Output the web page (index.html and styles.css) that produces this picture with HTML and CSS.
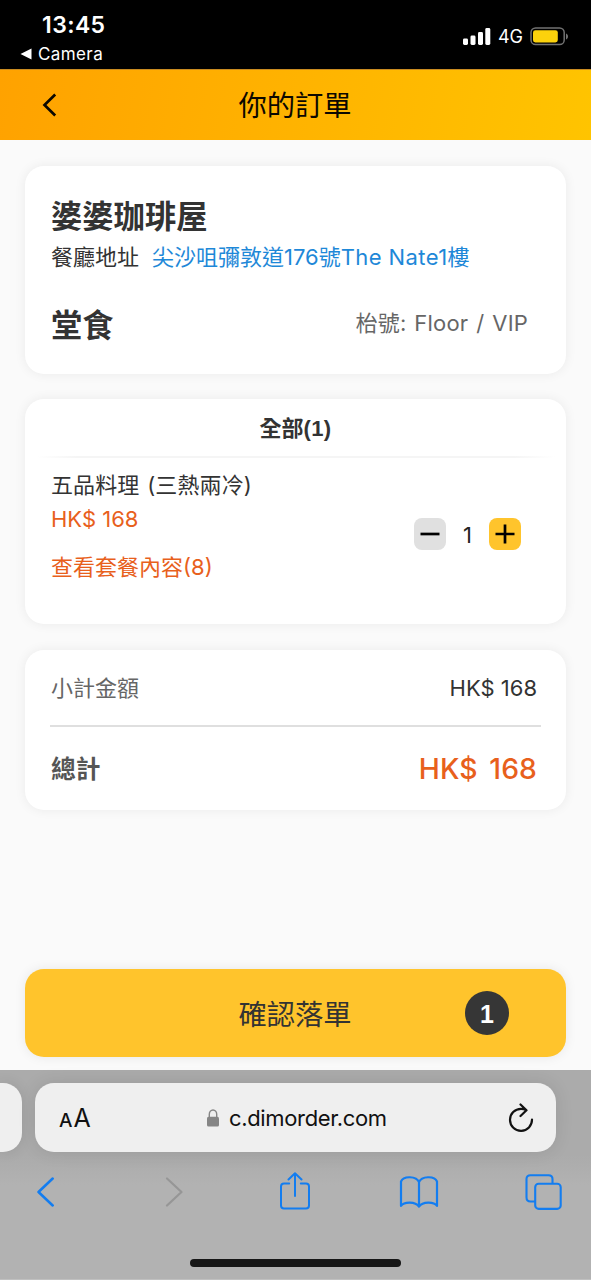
FILE: index.html
```html
<!DOCTYPE html>
<html lang="zh-HK">
<head>
<meta charset="utf-8">
<title>你的訂單</title>
<link rel="stylesheet" href="styles.css">
</head>
<body>
<div class="screen">
  <div class="status">
    <div class="status-left">
      <div class="clock">13:45</div>
      <div class="return-app">
        <svg width="12" height="12" viewBox="0 0 12 12"><path d="M.5 6 11.500.6v10.800z" fill="#fff"/></svg>
        <span>Camera</span>
      </div>
    </div>
    <div class="status-right">
      <svg width="28" height="17" viewBox="0 0 28 17" fill="#fff"><rect x="0" y="10.5" width="5" height="6.5" rx="1.4"/><rect x="7.5" y="7.5" width="5" height="9.5" rx="1.4"/><rect x="15" y="4" width="5" height="13" rx="1.4"/><rect x="22.3" y="0" width="5" height="17" rx="1.4"/></svg>
      <span class="network">4G</span>
      <svg width="39" height="19" viewBox="0 0 39 19"><rect x="1" y="1" width="33.2" height="16.6" rx="4.6" fill="none" stroke="#727272" stroke-width="1.5"/><rect x="3" y="3.2" width="24.8" height="12.2" rx="2.4" fill="#fcd20c"/><path d="M36 6.4c2.700 1 2.700 5 0 6z" fill="#727272"/></svg>
    </div>
  </div>

  <header class="header">
    <svg class="back" width="16" height="24" viewBox="0 0 16 24"><path d="M13.200 1.500 2.500 12l10.700 10.500" fill="none" stroke="#0c0800" stroke-width="2.700"/></svg>
    <h1 class="title">你的訂單</h1>
  </header>

  <main class="page">
    <section class="card shop">
      <h2 class="shop-name">婆婆珈琲屋</h2>
      <p class="address"><span>餐廳地址</span><a class="link">尖沙咀彌敦道176號<span class="latin">The Nate1</span>樓</a></p>
      <div class="dining">
        <h2 class="dining-type">堂食</h2>
        <span class="table">枱號: Floor / VIP</span>
      </div>
    </section>

    <section class="card order">
      <h3 class="tab">全部<span class="tab-count">(1)</span></h3>
      <div class="rule-soft"></div>
      <div class="item">
        <div class="item-text">
          <p class="item-name">五品料理 (三熱兩冷)</p>
          <p class="price">HK$ 168</p>
          <p class="details">查看套餐內容(8)</p>
        </div>
        <div class="stepper">
          <span class="step minus"><svg width="20" height="20" viewBox="0 0 20 20"><path d="M.5 10h19" stroke="#000" stroke-width="2.700"/></svg></span>
          <span class="count">1</span>
          <span class="step plus"><svg width="20" height="20" viewBox="0 0 20 20"><path d="M.5 10h19M10 .5v19" stroke="#000" stroke-width="2.700"/></svg></span>
        </div>
      </div>
    </section>

    <section class="card totals">
      <div class="row subtotal"><span>小計金額</span><span class="amount">HK$ 168</span></div>
      <div class="row total"><span class="total-label">總計</span><span class="total-amount">HK$ 168</span></div>
    </section>

    <button class="confirm"><span class="confirm-text">確認落單</span><span class="badge">1</span></button>
  </main>

  <footer class="browser">
    <div class="tabs">
      <div class="tab-prev"></div>
      <div class="urlbar">
        <span class="text-size"><span class="small-a">A</span>A</span>
        <span class="url">
          <svg width="12" height="18" viewBox="0 0 12 18"><rect x="0" y="7.800" width="12" height="9.700" rx="1.600" fill="#858585"/><path d="M2.300 8.500V5.300a3.700 4.300 0 0 1 7.400 0v3.200" fill="none" stroke="#858585" stroke-width="1.400"/></svg>
          <span>c.dimorder.com</span>
        </span>
        <svg class="reload" width="26" height="30" viewBox="0 0 26 30" fill="none" stroke="#111" stroke-width="2.200" stroke-linecap="round" stroke-linejoin="round"><path d="M24 16.500A11 11 0 1 1 13 5.800q2.700 0 5.200 1.200M12.500 1.500l6 5.700-6 5.800"/></svg>
      </div>
    </div>
    <nav class="toolbar">
      <svg width="20" height="30" viewBox="0 0 20 30"><path d="M17.700 1.500 3.500 15l14.200 13.500" fill="none" stroke="#137df0" stroke-width="2.500" stroke-linecap="round" stroke-linejoin="round"/></svg>
      <svg class="forward" width="20" height="30" viewBox="0 0 20 30"><path d="M2 1.500 16.500 15 2 28.500" fill="none" stroke="#969696" stroke-width="2.200" stroke-linecap="round" stroke-linejoin="round"/></svg>
      <svg class="share" width="32" height="38" viewBox="0 0 32 38" fill="none" stroke="#137df0" stroke-width="2" stroke-linecap="round" stroke-linejoin="round"><path d="M10.200 11.500H5q-3 0-3 3V33.500q0 3 3 3h22q3 0 3-3v-19q0-3-3-3h-5.200M16 24V1.500M9.500 7.500 16 1.200l6.500 6.300"/></svg>
      <svg class="book" width="40" height="34" viewBox="0 0 40 34" fill="none" stroke="#137df0" stroke-width="2.200" stroke-linejoin="round"><path d="M20 7.200C17.500 1 4.500.5 2 6.500V31c3-4.500 14.500-4.500 18 .500V7.200C22.500 1 35.500.5 38 6.500V31c-3-4.500-14.500-4.500-18 .500"/></svg>
      <svg class="pages" width="37" height="36" viewBox="0 0 37 36" fill="none" stroke="#137df0" stroke-width="2.100" stroke-linejoin="round"><rect x="10.200" y="9.700" width="25.500" height="25.200" rx="3.500"/><path d="M10 27.500H5.500q-4 0-4-4V5q0-3.800 4-3.800h18q4 0 4 3.800v4.500"/></svg>
    </nav>
    <div class="home"></div>
  </footer>
</div>
</body>
</html>
```
FILE: styles.css
```css
* { box-sizing: border-box; margin: 0; padding: 0; }
body { width: 591px; height: 1280px; overflow: hidden; background: #fafafa; }
svg { display: block; flex: none; }
.screen {
  display: flex; flex-direction: column; width: 591px; height: 1280px;
  font-family: Inter, "Noto Sans CJK TC", sans-serif; font-size: 22px; line-height: 32px;
  color: #333; white-space: nowrap;
}
.status { height: 69px; background: #000; color: #fff; display: flex; justify-content: space-between; }
.status-left { padding: 11px 0 0 20px; }
.clock { padding-left: 22px; font-size: 23px; line-height: 28px; font-weight: 600; letter-spacing: 0.4px; }
.return-app { display: flex; align-items: center; gap: 6px; margin-top: 5px; font-size: 17px; line-height: 20px; letter-spacing: 0.4px; font-weight: 400; }
.status-right { display: flex; align-items: center; height: 73px; padding-right: 22px; }
.network { width: 25px; margin: 0 7px; font-size: 18px; line-height: 20px; letter-spacing: -0.2px; }
.header {
  height: 71px; display: flex; align-items: center; padding-left: 42px;
  background: linear-gradient(100deg, #ffa200, #ffc400); border-top: 1px solid #c98b20; color: #0c0800;
}
.title { flex: 1; padding: 2px 59px 0 0; text-align: center; font-size: 28.300px; line-height: 40px; font-weight: 400; }
.page { height: 930px; padding: 26px 25px 0; background: #fafafa; }
.card { background: #fff; border-radius: 19px; box-shadow: 0 0 12px rgba(0,0,0,.065); }
.shop { height: 208px; padding: 31px 38px 0 26px; }
.shop-name, .dining-type { font-size: 31.300px; line-height: 40px; font-weight: 600; }
.address { display: flex; gap: 13px; margin-top: 4px; }
.link { color: #1e88d8; }
.latin { letter-spacing: 0.4px; }
.dining { display: flex; justify-content: space-between; align-items: center; margin-top: 30px; }
.dining-type { padding-top: 3px; }
.table { padding-bottom: 3px; color: #666; letter-spacing: 0.2px; word-spacing: 1.500px; }
.order { height: 225px; margin-top: 25px; }
.tab { height: 57px; line-height: 58px; text-align: center; font-size: 22px; font-weight: 700; }
.tab-count { font-family: "Liberation Sans", sans-serif; letter-spacing: 0.3px; }
.rule-soft { height: 2px; margin: 0 11px; background: linear-gradient(90deg, #fff, #f5f5f5 8%, #f5f5f5 92%, #fff); }
.item { display: flex; justify-content: space-between; padding: 11px 45px 0 26px; }
.item-name { word-spacing: 1.500px; letter-spacing: 0.1px; }
.price, .details { color: #e8601c; }
.price { margin-top: 2px; }
.details { margin-top: 16px; }
.stepper { display: flex; align-items: center; height: 32px; margin-top: 49px; }
.step { display: grid; place-items: center; width: 32px; height: 32px; border-radius: 8px; }
.minus { background: #e0e0e0; }
.plus { background: #ffc42c; }
.count { width: 43px; padding-top: 1px; text-align: center; color: #222; }
.totals { height: 160px; margin-top: 26px; padding: 0 25px; }
.row { display: flex; justify-content: space-between; align-items: center; padding: 0 4px 0 1px; color: #666; }
.subtotal { height: 77px; border-bottom: 2px solid #dfdfdf; }
.amount { color: #333; }
.total { height: 84px; }
.total-label { font-size: 24.700px; font-weight: 600; color: #555; }
.total-amount { font-size: 28.300px; font-weight: 500; word-spacing: 4px; letter-spacing: 0.1px; color: #e8601c; }
.confirm {
  position: relative; display: flex; align-items: center; justify-content: center;
  width: 541px; height: 88px; margin-top: 159px; border: 0; border-radius: 19px;
  background: #ffc42c; color: #333; font: inherit; box-shadow: 0 0 12px rgba(0,0,0,.08);
}
.confirm-text { font-size: 28.300px; line-height: 40px; padding: 4px 1px 0 0; }
.badge {
  position: absolute; right: 57px; top: 22px; width: 44px; height: 44px; border-radius: 50%;
  background: #363636; color: #fff; font-family: "Liberation Sans", sans-serif; font-size: 25px;
  font-weight: 700; line-height: 46px; text-align: center;
}
.browser { height: 210px; background: linear-gradient(#ababab, #ababab 85px, #b2b2b2 115px); border-bottom: 1px solid #c0c0c0; }
.tabs { display: flex; gap: 13px; padding-top: 13px; }
.tab-prev { width: 22px; height: 69px; border-radius: 0 19px 19px 0; background: #efefef; box-shadow: 0 0 14px rgba(0,0,0,.1); }
.urlbar {
  display: flex; align-items: center; width: 521px; height: 69px;
  padding: 0 22px 0 24px; border-radius: 19px; background: #efefef; color: #111;
  box-shadow: 0 0 18px rgba(0,0,0,.1);
}
.text-size { width: 148px; padding-top: 3px; font-size: 25px; }
.small-a { font-size: 19px; font-weight: 500; margin-right: 1px; }
.url { display: flex; align-items: center; gap: 10px; letter-spacing: -0.350px; }
.reload { margin-left: auto; }
.toolbar { display: flex; align-items: center; height: 79px; padding-left: 35px; }
.forward { margin-left: 110px; }
.share { margin: 0 0 2px 94px; }
.book { margin-left: 88px; }
.pages { margin-left: 86px; }
.home { width: 211px; height: 8px; margin: 28px 0 0 190px; border-radius: 4px; background: #161616; }
```
